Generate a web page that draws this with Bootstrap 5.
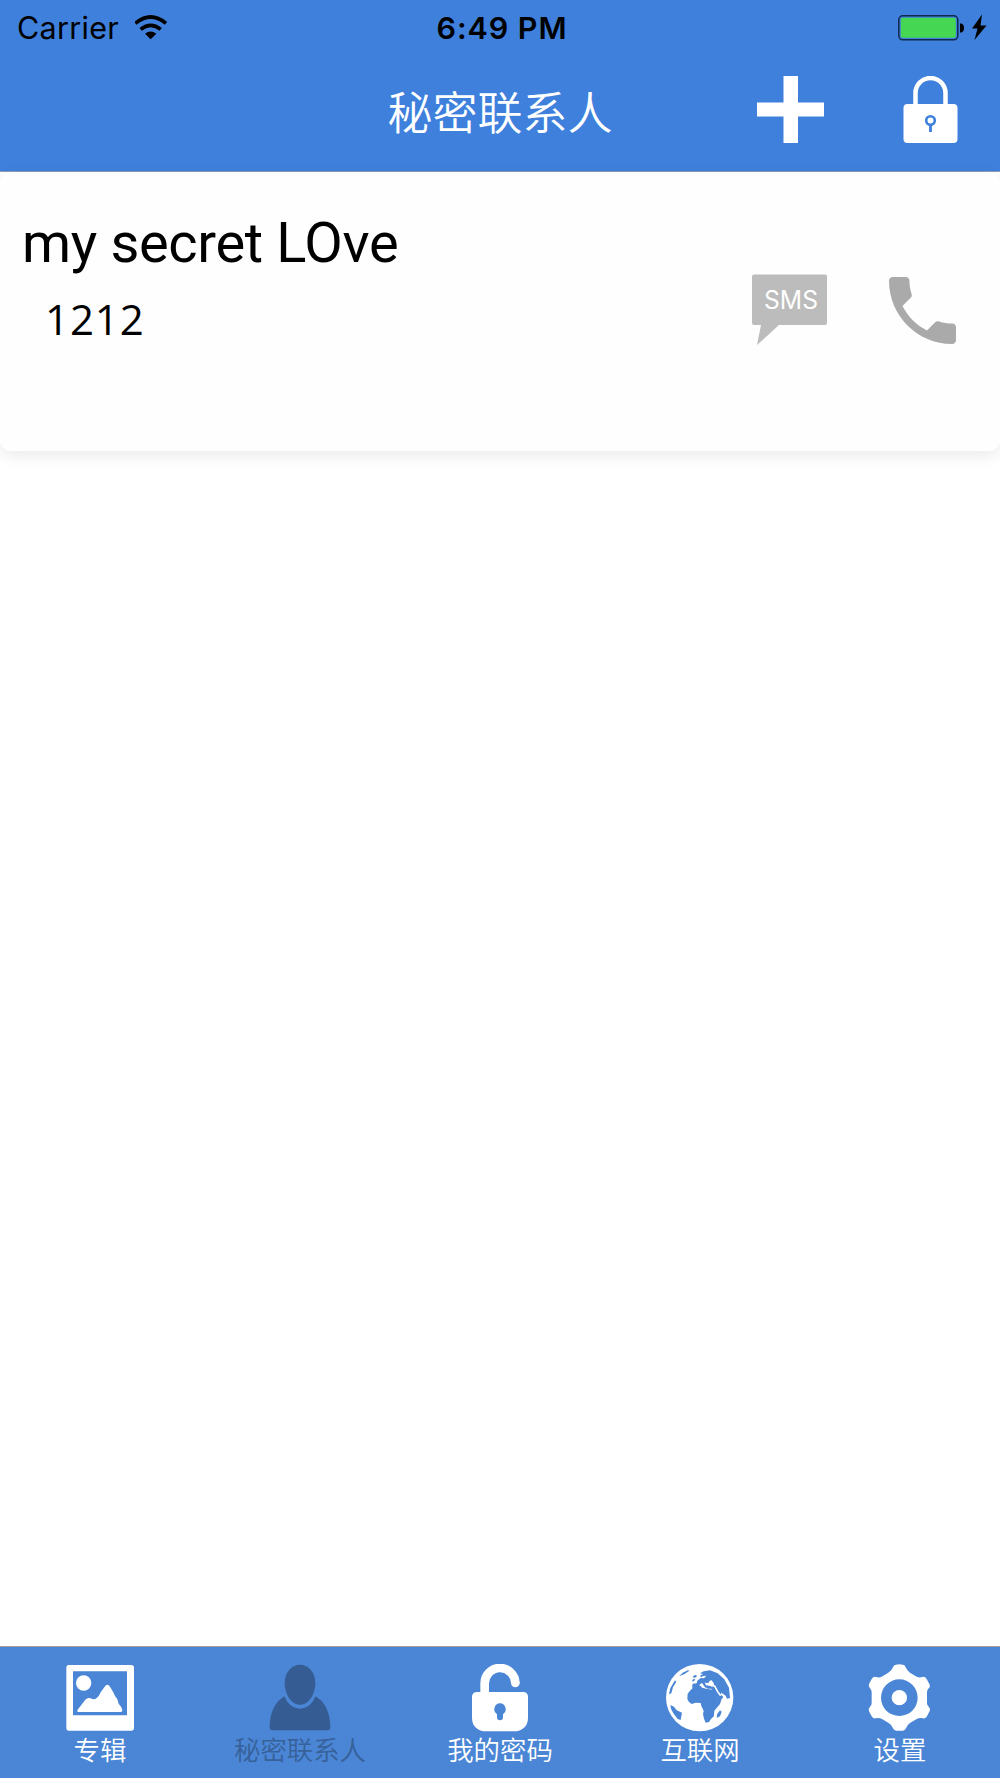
<!DOCTYPE html>
<html lang="zh-CN">
<head>
  <meta charset="UTF-8">
  <meta name="viewport" content="width=device-width, initial-scale=1.0">
  <title>秘密联系人</title>
  <link href="https://cdn.jsdelivr.net/npm/bootstrap@5.3.0/dist/css/bootstrap.min.css" rel="stylesheet">
  <style>
    body { font-family: "Noto Sans CJK SC", sans-serif; background: #fff; color: #000; }
    svg { display: block; flex: none; }

    .app-header { height: 172px; background: #3e80dc; border-bottom: 1px solid #8a9cb5; }
    .status-bar { height: 54px; padding: 0 13px 0 17px; font-family: Inter, sans-serif; font-size: 30.5px; line-height: 54px; }
    .status-side { flex: 1 1 0; }
    .clock { font-weight: 600; letter-spacing: .9px; padding-top: 1px; }
    .carrier { letter-spacing: .3px; padding-top: 1px; }
    .title-bar { height: 117px; padding: 22px 42px 0 42px; }
    .page-title { font-size: 45px; font-weight: 350; line-height: 67px; padding-top: 1px; }
    .title-side { flex: 1 1 0; }
    .title-actions { gap: 79px; }

    .contact-card { height: 279px; border: 0; border-radius: 11px; background: #fefefe; box-shadow: 0 4px 16px rgba(0, 0, 0, .09); padding: 38px 44px 0 22px; }
    .contact-name { font-family: Roboto, sans-serif; font-size: 56px; line-height: 66px; letter-spacing: -.35px; }
    .contact-phone { font-family: "Open Sans", sans-serif; font-size: 42px; line-height: 60px; margin: 13px 0 0 23px; letter-spacing: .9px; }
    .contact-actions { gap: 62px; padding-top: 64px; }
    .call-icon { margin-top: 3px; }

    .tab-bar { height: 132px; background: #4a86d5; border-top: 1px solid #a39c96; }
    .tab-item { color: #fff; padding-top: 17px; }
    .tab-item.active { color: #355d94; }
    .tab-label { font-size: 26.4px; font-weight: 350; line-height: 34px; }
    .tab-item.active .tab-label { color: #376199; }
  </style>
</head>
<body>
  <div class="d-flex flex-column vh-100 overflow-hidden">
    <header class="app-header flex-shrink-0">
      <!-- Status bar -->
      <div class="status-bar d-flex">
        <div class="status-side d-flex align-items-center">
          <span class="carrier">Carrier</span>
          <svg class="ms-3" width="33" height="25" viewBox="403 43 99 75">
            <path d="M404 68Q450 30 496 68" fill="none" stroke="#000" stroke-width="11"/>
            <path d="M420 86Q450 62 480 86" fill="none" stroke="#000" stroke-width="11"/>
            <path d="M433 99Q450 86 467 99L450 116Z"/>
          </svg>
        </div>
        <span class="clock">6:49 PM</span>
        <div class="status-side d-flex align-items-center justify-content-end">
          <svg width="89" height="27" viewBox="0 0 89 27">
            <rect x=".8" y="1.8" width="59" height="24" rx="4" fill="none" stroke="#10294e" stroke-width="1.5"/>
            <rect x="2.8" y="3.8" width="55" height="20" rx="2" fill="#45d654"/>
            <path d="M62 9.500c3 0 4 2 4 4.500s-1 4.500-4 4.500z"/>
            <path d="M84 .5 74 14.500h5.500l-3 11.500L88.500 11.500h-6z"/>
          </svg>
        </div>
      </div>
      <!-- Title bar -->
      <div class="title-bar d-flex align-items-start text-white">
        <div class="title-side"></div>
        <h1 class="page-title mb-0">秘密联系人</h1>
        <div class="title-side title-actions d-flex justify-content-end">
          <svg width="67" height="67" viewBox="0 0 67 67" fill="#fff"><path d="M26.500 0h14.500v26.500h26v14H41V67H26.500V40.500H0v-14h26.500z"/></svg>
          <svg width="55" height="67" viewBox="0 0 55 67">
            <path d="M12.500 30V17a15 15 0 0 1 30 0v13" fill="none" stroke="#fff" stroke-width="4.500"/>
            <rect x=".5" y="28" width="54" height="39" rx="4" fill="#fff"/>
            <path d="M27.500 49v7" stroke="#3e80dc" stroke-width="2.800"/>
            <circle cx="27.500" cy="44.500" r="4.300" fill="none" stroke="#3e80dc" stroke-width="2.600"/>
          </svg>
        </div>
      </div>
    </header>

    <!-- Contact list -->
    <main class="flex-grow-1">
      <div class="contact-card card flex-row justify-content-between">
        <div>
          <div class="contact-name">my secret LOve</div>
          <div class="contact-phone">1212</div>
        </div>
        <div class="contact-actions d-flex align-items-start">
          <svg width="75" height="72" viewBox="0 0 75 72">
            <path d="M2 .5h71q2 0 2 2v46.500q0 2-2 2H27L5 71 9 51H2q-2 0-2-2V2.500q0-2 2-2z" fill="#bcbcbc"/>
            <text x="12" y="34.500" font-family="Inter" font-size="25" font-weight="400" fill="#fff" textLength="54" lengthAdjust="spacingAndGlyphs">SMS</text>
          </svg>
          <svg class="call-icon" width="67" height="67" viewBox="3 3 18 18" fill="#aaa">
            <path d="M6.620 10.790c1.440 2.830 3.760 5.140 6.590 6.590l2.200-2.200c.27-.27.67-.36 1.020-.24 1.120.37 2.330.57 3.570.57.55 0 1 .45 1 1V20c0 .55-.45 1-1 1-9.390 0-17-7.610-17-17 0-.55.45-1 1-1h3.500c.55 0 1 .45 1 1 0 1.250.2 2.450.57 3.570.11.35.03.74-.25 1.020z"/>
          </svg>
        </div>
      </div>
    </main>

    <!-- Bottom tabs -->
    <nav class="tab-bar d-flex flex-shrink-0">
      <div class="tab-item col d-flex flex-column align-items-center">
        <svg width="68" height="68" viewBox="198 102 204 204" fill="currentColor">
          <path fill-rule="evenodd" d="M206 105h188q8 0 8 8v180q0 9-8 9H207q-8 0-8-9V113q0-8 7-8zM219 124v132h162V124z"/>
          <circle cx="251" cy="159" r="23"/>
          <path d="M233 246q-3-3 1-8l22-29q7-8 16-4 10 6 17 0 9-6 13-18 6-9 12-17 8-12 16 0 10 15 15 28 9 8 11 23 9 9 11 19 1 6-5 6z"/>
        </svg>
        <span class="tab-label">专辑</span>
      </div>
      <div class="tab-item active col d-flex flex-column align-items-center">
        <svg width="68" height="68" viewBox="198 102 204 204" fill="currentColor">
          <path d="M300 104c26 0 46 24 46 54 0 35-20 66-46 66s-46-31-46-66c0-30 20-54 46-54z"/>
          <path d="M254 199c8 23 26 37 46 37s38-14 46-37c28 15 45 48 45 93q0 9-9 9H218q-9 0-9-9c0-45 17-78 45-93z"/>
        </svg>
        <span class="tab-label">秘密联系人</span>
      </div>
      <div class="tab-item col d-flex flex-column align-items-center">
        <svg width="68" height="68" viewBox="198 102 204 204" fill="currentColor">
          <path d="M254 192V161a46 46 0 0 1 92-2" fill="none" stroke="currentColor" stroke-width="26"/>
          <circle cx="346" cy="159" r="13"/>
          <path fill-rule="evenodd" d="M232 186h137q15 0 15 15v62q0 20-12 30-11 11-31 11h-82q-20 0-31-11-12-10-12-30v-62q0-15 16-15zM300 220a18 18 0 0 0-9 33v9a9 9 0 0 0 18 0v-9a18 18 0 0 0-9-33z"/>
        </svg>
        <span class="tab-label">我的密码</span>
      </div>
      <div class="tab-item col d-flex flex-column align-items-center">
        <svg width="68" height="68" viewBox="198 102 204 204">
          <circle cx="299" cy="203" r="101" fill="#fff"/>
          <g fill="#4a86d5">
            <!-- Africa -->
            <path d="M281 171l21-4 4 6 16 4 16 2 8 15 8 15 10 1-4 12-17 20-1 16-9 9-6 9-10 2-5-12-3-13 2-11-7-14-2-9-15-1-12 4-8-6-5-9 1-16 7-9z"/>
            <!-- Europe and Asia -->
            <path d="M300 130l11-6 19-3 23 9 20 18 14 25 3 31-9 2-4-9-13-9-2 5 8 8-7 9-8 2-7-12-12-16-1-8-12 0-7-5 3-5 15 3 8-4-1-6-7 0-3-5-6 5-11-1 7 12-5 3-10-14-6 4-3 9-16 4-5-5 2-10 12-1 2-8 10-8 10 1 7-8-9 1-7 4-3-5 9-5z"/>
            <path d="M279 138l10-4 1 7-9 3zM276 151l6-5 4 3-7 6z"/>
            <!-- Americas, Greenland and Madagascar -->
            <path d="M211 225l11 5 8 11 16 7-4 22-9-3-13-17-7-14zM207 193l4-19 14-23 4 4-10 17-5 18zM237 139l11-11 17-8 2 3-13 9zM350 264l2-13 8-10 5 4-5 14z"/>
          </g>
          <path d="M333 167l11 1 9 17 9 12" fill="none" stroke="#fff" stroke-width="5"/>
          <path d="M326 155l8-5 7 9-6 4z" fill="#fff"/>
        </svg>
        <span class="tab-label">互联网</span>
      </div>
      <div class="tab-item col d-flex flex-column align-items-center">
        <svg width="68" height="68" viewBox="198 102 204 204" fill="currentColor">
          <path fill-rule="evenodd" d="M287 104q11-2 22 0 6 1 8 8 4 10 13 16l20 12q8 4 17 1 8-2 13 6l8 15q4 8-2 13-5 4-5 12v32q0 7 5 11 6 6 3 13l-8 16q-4 8-12 6-10-3-19 2l-20 12q-9 6-12 16-2 6-9 7h-21q-7-1-9-7-4-11-13-16l-20-12q-9-5-19-2-8 2-12-6l-8-15q-4-7 3-14 5-4 5-11v-32q0-8-5-12-6-6-3-13l8-15q5-8 13-6 9 3 17-1l20-12q10-6 14-16 2-7 9-8zM298 148a55 55 0 1 0 0 110 55 55 0 0 0 0-110z"/>
          <circle cx="298" cy="203" r="23"/>
        </svg>
        <span class="tab-label">设置</span>
      </div>
    </nav>
  </div>
  <script src="https://cdn.jsdelivr.net/npm/bootstrap@5.3.0/dist/js/bootstrap.bundle.min.js"></script>
</body>
</html>
